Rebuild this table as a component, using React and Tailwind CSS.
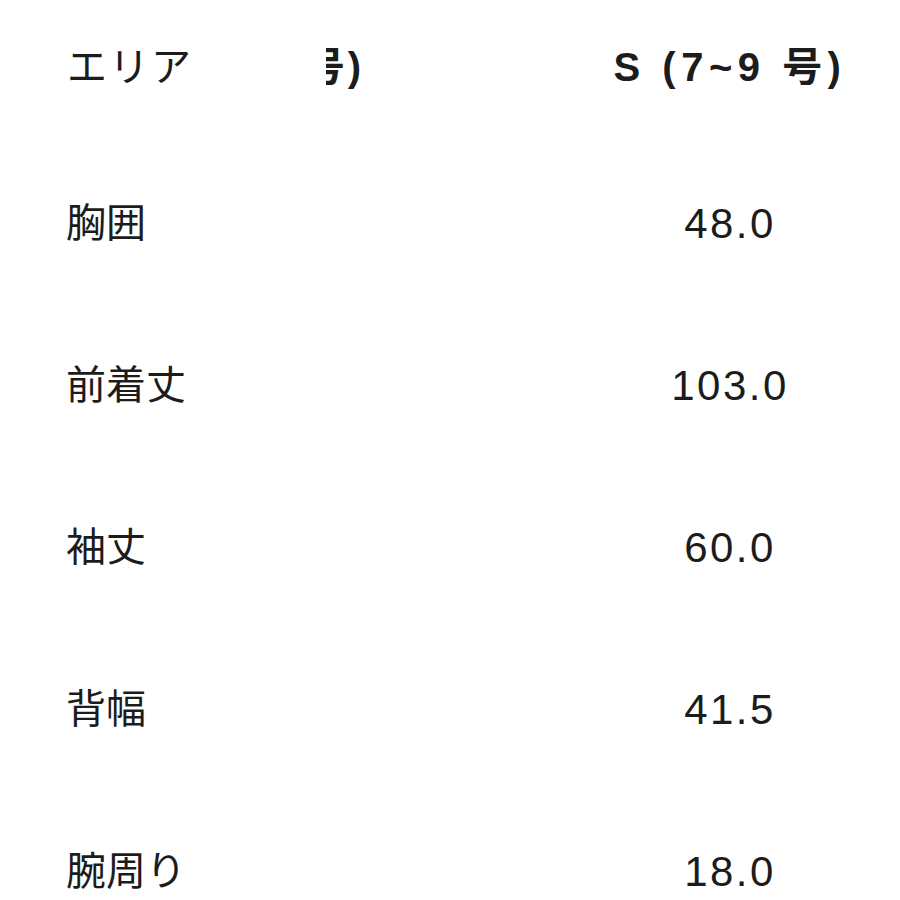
import React from 'react';

const rows = [
  { label: '胸囲', value: '48.0' },
  { label: '前着丈', value: '103.0' },
  { label: '袖丈', value: '60.0' },
  { label: '背幅', value: '41.5' },
  { label: '腕周り', value: '18.0' },
];

const font = { fontFamily: '"Liberation Sans", "Noto Sans CJK JP", sans-serif' };

const App = () => {
  return (
    <div className="w-[900px] h-[900px] bg-white overflow-hidden text-[#1c1c1c]" style={font}>
      <div className="flex items-center h-[142px] pb-[8px]">
        <div className="w-[326px] shrink-0 pl-[67px] text-[40px] tracking-[2px] bg-white">エリア</div>
        <div className="w-[38px] shrink-0 overflow-hidden flex justify-end">
          <span className="whitespace-nowrap text-[40px] font-bold tracking-[3px]">XS (5~7 号)</span>
        </div>
        <div className="w-[300px] shrink-0 ml-[216px] flex justify-center">
          <span className="whitespace-nowrap text-[40px] font-bold tracking-[5.5px]">S (7~9 号)</span>
        </div>
      </div>
      {rows.map(r => (
        <div key={r.label} className="flex items-center h-[162px]">
          <div className="w-[326px] shrink-0 pl-[66px] text-[40px]">{r.label}</div>
          <div className="w-[300px] shrink-0 ml-[254px] flex justify-center">
            <span className="text-[42px] tracking-[2.5px]">{r.value}</span>
          </div>
        </div>
      ))}
    </div>
  );
};

export default App;
